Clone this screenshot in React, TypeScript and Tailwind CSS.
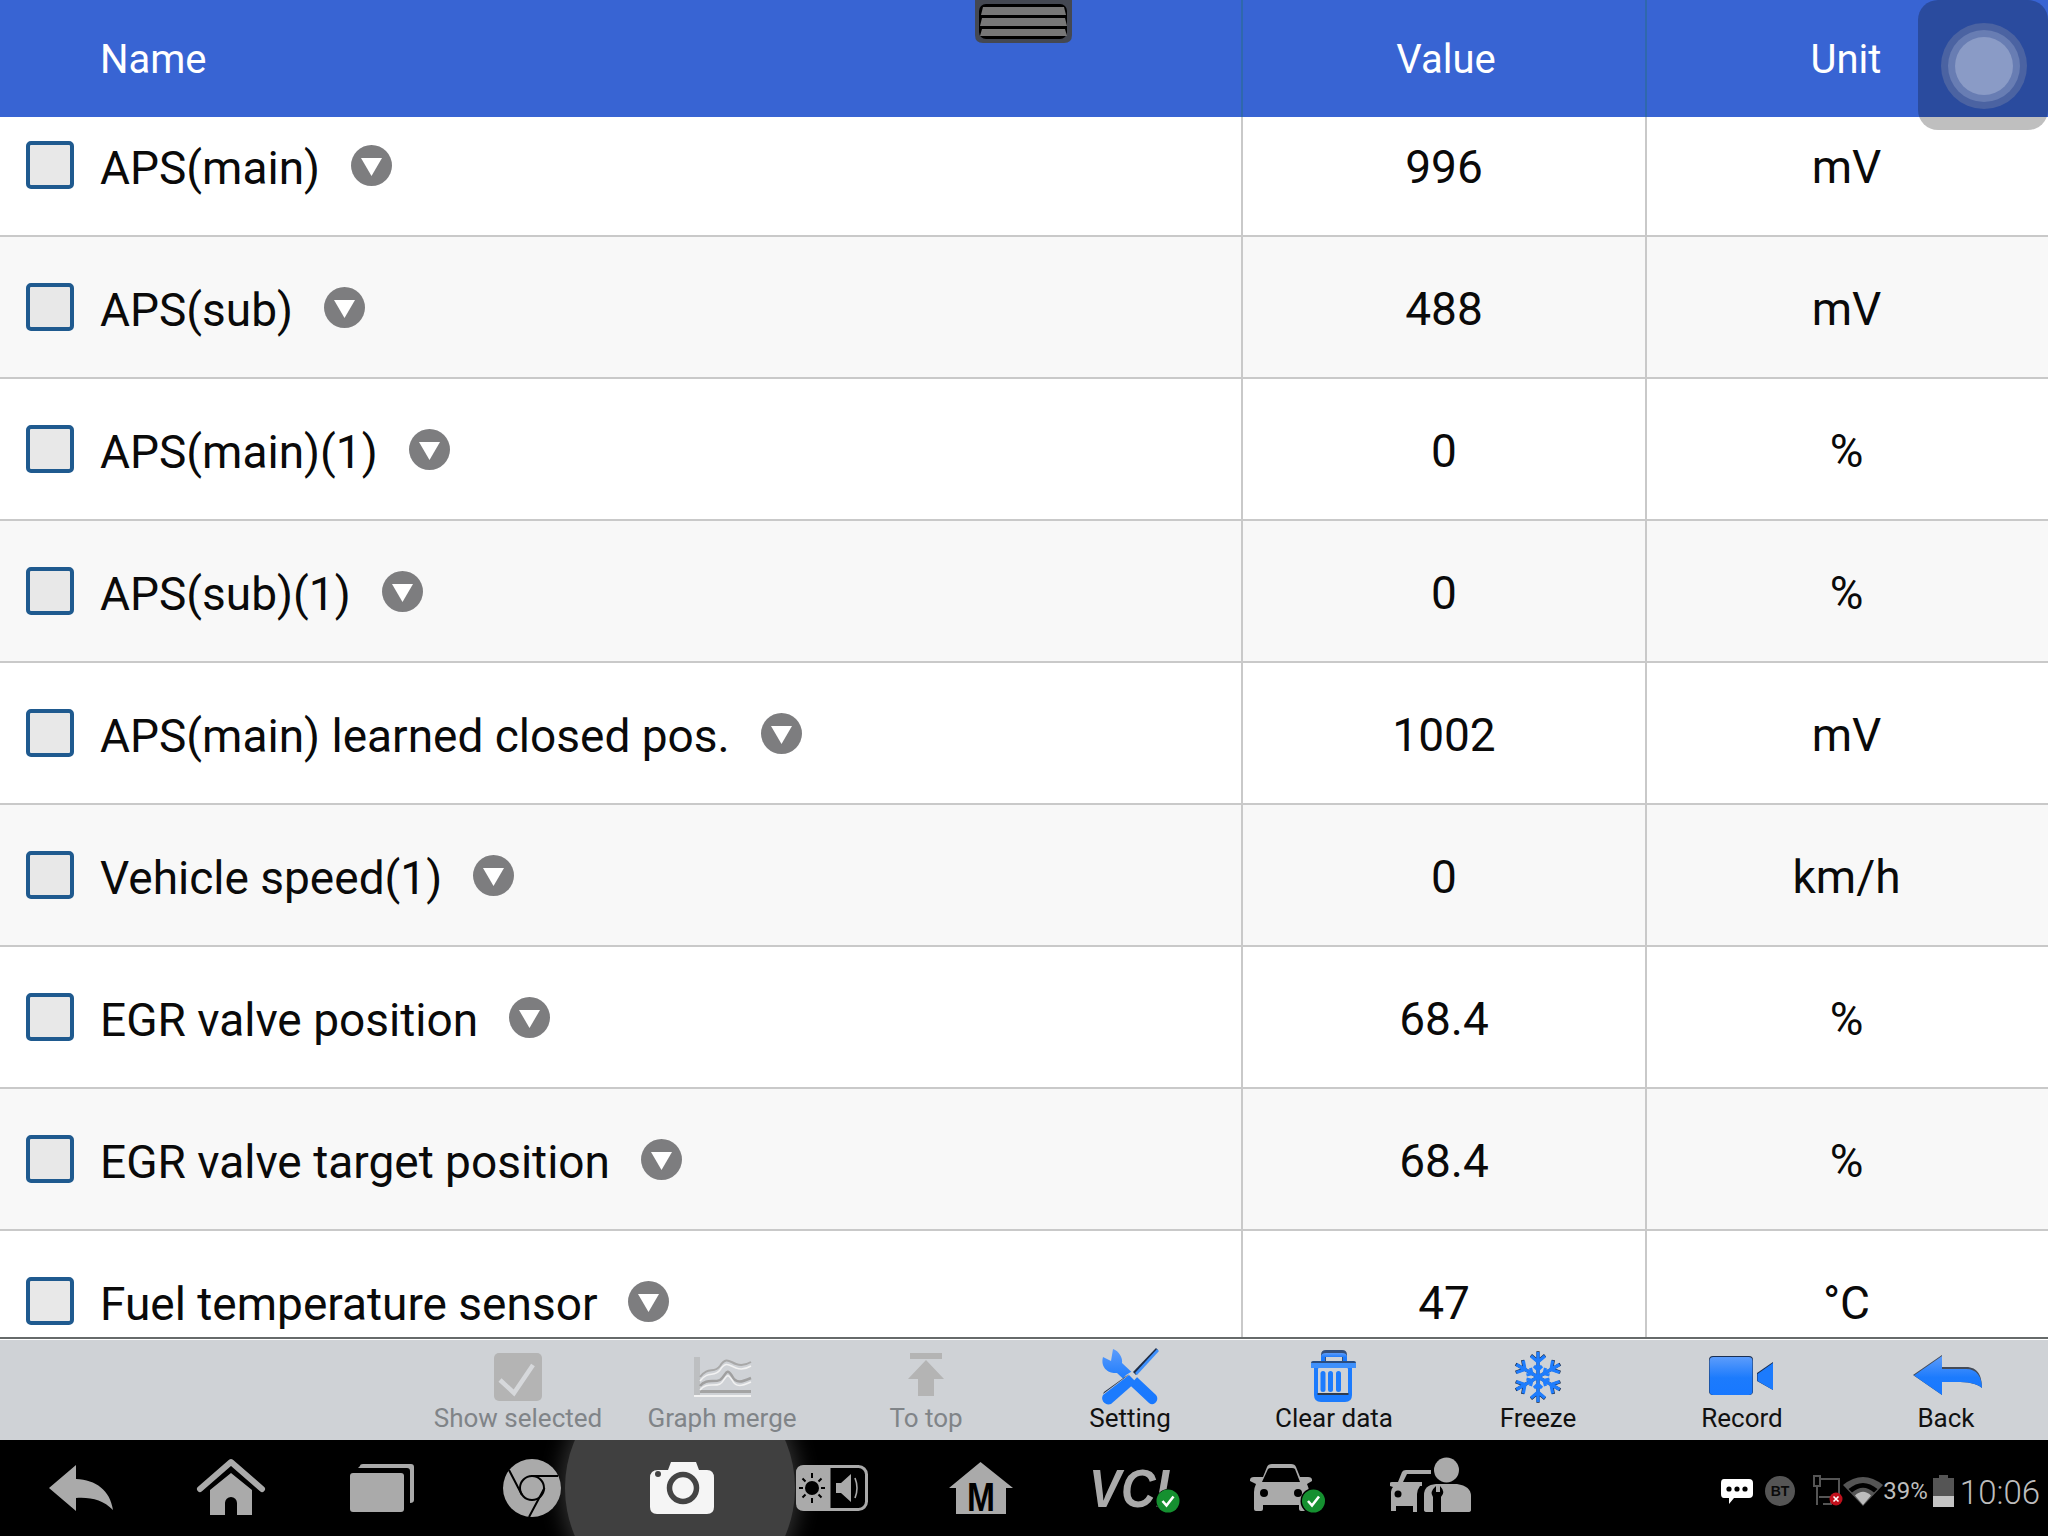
import React from "react";

const rows = [
  ["APS(main)", "996", "mV"],
  ["APS(sub)", "488", "mV"],
  ["APS(main)(1)", "0", "%"],
  ["APS(sub)(1)", "0", "%"],
  ["APS(main) learned closed pos.", "1002", "mV"],
  ["Vehicle speed(1)", "0", "km/h"],
  ["EGR valve position", "68.4", "%"],
  ["EGR valve target position", "68.4", "%"],
  ["Fuel temperature sensor", "47", "°C"],
];

function Grad() {
  return (
    <defs>
      <linearGradient id="blueg" x1="0" y1="0" x2="0" y2="1">
        <stop offset="0" stopColor="#5c9cfb" />
        <stop offset="0.55" stopColor="#1c7bfd" />
        <stop offset="1" stopColor="#1878ff" />
      </linearGradient>
    </defs>
  );
}

const B = "url(#blueg)";

const toolIcons: Record<string, React.ReactNode> = {
  show: (
    <>
      <rect x="16" y="5" width="48" height="48" rx="5" fill="#b4b4b4" />
      <path d="M22 32 L36 45 L55 17" fill="none" stroke="#d6d8db" strokeWidth="4.5" />
    </>
  ),
  graph: (
    <>
      <rect x="12" y="9" width="6" height="39" fill="#bdbfc1" />
      <rect x="18" y="42" width="51" height="3" fill="#a4a4a4" />
      <rect x="12" y="47" width="57" height="2" fill="#f2f2f2" />
      <path d="M18 29 C26 18 32 26 38 18 C44 8 48 14 54 16 C60 18 64 17 69 14" fill="none" stroke="#a8a8a8" strokeWidth="2" />
      <path d="M18 33 C26 22 32 30 38 22 C44 12 48 18 54 20 C60 22 64 21 69 18" fill="none" stroke="#f2f2f2" strokeWidth="1.5" />
      <path d="M18 38 C24 30 32 35 38 32 C44 28 44 18 50 28 C54 36 60 34 69 30" fill="none" stroke="#a0a0a0" strokeWidth="2.5" />
      <path d="M18 42 C24 34 32 39 38 36 C44 32 44 22 50 32 C54 40 60 38 69 34" fill="none" stroke="#f2f2f2" strokeWidth="1.5" />
    </>
  ),
  top: (
    <>
      <rect x="24" y="5" width="32" height="6" fill="#b4b4b4" />
      <path d="M40 12 L58 31 H48 V48 H32 V31 H22 Z" fill="#b4b4b4" />
    </>
  ),
  setting: (
    <g>
      <path d="M13 9 L21 13 L23 1 C29 3 33 10 32 15 L66 47 C70 52 64 59 59 55 L27 25 C19 26 10 20 13 9 Z" fill={B} />
      <path d="M36 27 L44 22 L49 27 L22 57 L16 52 Z" fill="#cfd2d6" />
      <path d="M66 0 L68 2 L46 27 L43 24 Z" fill="#1f2c44" />
      <path d="M67 1 L69 3 L47 27 L45 25 Z" fill="#3f90fb" />
      <path d="M39 27 L46 34 L21 56 C15 58 10 52 13 47 Z" fill="#1c7bfd" />
      <path d="M39 26 L37 28 L13 46 L14 44 Z" fill="#1f2c44" />
    </g>
  ),
  clear: (
    <>
      <path d="M27 13 V7 Q27 2 32 2 H48 Q53 2 53 7 V13 H48 V8 H32 V13 Z" fill="#33507d" />
      <path d="M27 13 V9 Q27 5 32 5 H48 Q53 5 53 9 V13 H49 V9 H31 V13 Z" fill={B} />
      <rect x="17" y="13" width="45" height="6" rx="2" fill="#2a4d80" />
      <rect x="17" y="15" width="45" height="5" fill="#3f90fb" />
      <path d="M20 20 H58 V47 Q58 54 51 54 H27 Q20 54 20 47 Z" fill="#1c7bfd" />
      <rect x="24" y="20" width="30" height="27" rx="1" fill="#cfd2d6" />
      <rect x="23.5" y="45" width="31" height="2" fill="#2f3a4c" />
      <rect x="26.5" y="23" width="5" height="21" rx="2.5" fill="#1c7bfd" />
      <rect x="34" y="23" width="5" height="21" rx="2.5" fill="#1c7bfd" />
      <rect x="42" y="23" width="5" height="21" rx="2.5" fill="#1c7bfd" />
    </>
  ),
  freeze: (
    <>
      {[0, 60, 120, 180, 240, 300].map((a) => (
        <g key={a} transform={`rotate(${a} 40 29)`} fill="none">
          <path d="M40 29 V4 M33 8 L40 14 L47 8" stroke="#1a2a46" strokeWidth="3.2" transform="translate(0 -0.8)" />
        </g>
      ))}
      {[0, 60, 120, 180, 240, 300].map((a) => (
        <g key={a} transform={`rotate(${a} 40 29)`} fill="none">
          <path d="M40 29 V4 M33 8 L40 14 L47 8 M36 18 L40 22 L44 18" stroke="#1f7dfd" strokeWidth="3.2" />
        </g>
      ))}
    </>
  ),
  record: (
    <>
      <rect x="7" y="8" width="44" height="39" rx="4" fill="#1a2f52" />
      <rect x="7.5" y="9" width="43" height="38" rx="4" fill={B} />
      <path d="M55 25 L71 14 V42 L55 33 Z" fill="#1a2f52" />
      <path d="M55.5 26 L71 15 V42 L55.5 33 Z" fill="#1c7bfd" />
    </>
  ),
  back: (
    <>
      <path d="M7 27 L36 7 V19 H60 C72 19 76 28 76 40 C70 35 62 34 50 34 H36 V47 Z" fill="#444b58" />
      <path d="M8 27.5 L36 8 V21 H60 C71 21 76 29 76 40 C70 35 62 34 50 34 H36 V47 Z" fill={B} />
    </>
  ),
};

const tools = [
  ["show", "Show selected", false],
  ["graph", "Graph merge", false],
  ["top", "To top", false],
  ["setting", "Setting", true],
  ["clear", "Clear data", true],
  ["freeze", "Freeze", true],
  ["record", "Record", true],
  ["back", "Back", true],
] as const;

const G = "#aaaaaa";

function Badge({ x, y }: { x: number; y: number }) {
  return (
    <g>
      <circle cx={x} cy={y} r="11.5" fill="#159030" />
      <path d={`M${x - 5.5} ${y} l4 4.5 l7 -9`} fill="none" stroke="#fff" strokeWidth="2.6" />
    </g>
  );
}

const navIcons: React.ReactNode[] = [
  <path key="b" d="M18 48 L45 25 V39 C65 40 79 50 82 70 C72 60 60 57 45 58 V71 Z" fill={G} />,
  <g key="h">
    <path d="M19 49 L50 22 L81 49" fill="none" stroke={G} strokeWidth="6" strokeLinecap="round" strokeLinejoin="round" />
    <path d="M29 75 V50 L50 33 L71 50 V75 H56 V63 A6 6 0 0 0 44 63 V75 Z" fill={G} />
  </g>,
  <g key="r">
    <path d="M29 26 Q29 24 32 24 H80 Q83 24 83 27 V60 Q83 63 79 63 V31 Q79 28 76 28 H27 Z" fill={G} />
    <rect x="19" y="33" width="54" height="39" rx="3" fill={G} />
  </g>,
  <g key="c">
    <circle cx="51" cy="48" r="29" fill={G} />
    <circle cx="51" cy="48" r="12" fill="none" stroke="#000" strokeWidth="2" />
    <path d="M77 36 H50 M48 77 L63.5 48 M28 30 L41 55" fill="none" stroke="#000" strokeWidth="2" />
  </g>,
  <g key="cam">
    <path d="M19 38 Q19 30 27 30 H37 L40 22 H65 L68 30 H76 Q83 30 83 38 V67 Q83 74 76 74 H26 Q19 74 19 67 Z" fill="#f5f5f5" />
    <circle cx="27" cy="34" r="3" fill="#444" />
    <circle cx="52" cy="48" r="13.5" fill="none" stroke="#444" strokeWidth="5.5" />
  </g>,
  <g key="bv">
    <rect x="16.5" y="26.5" width="69" height="43" rx="8" fill="none" stroke={G} strokeWidth="3" />
    <path d="M49.5 25 H23 Q15 25 15 33 V63 Q15 71 23 71 H49.5 Z" fill={G} />
    <circle cx="31" cy="48" r="7" fill="#000" />
    <path d="M31 33 V38 M31 58 V63 M18 48 H22 M40 48 H44 M21.5 38.5 L24.5 41.5 M37.5 54.5 L40.5 57.5 M40.5 38.5 L37.5 41.5 M24.5 54.5 L21.5 57.5" stroke="#000" strokeWidth="2" />
    <path d="M55 43 H60 L70 34 V62 L60 53 H55 Z" fill={G} />
    <path d="M74 38 Q78 48 74 58" fill="none" stroke={G} strokeWidth="1.6" />
  </g>,
  <g key="m">
    <path d="M49.5 22 L82 48 H75 V74 H25 V48 H18 Z" fill={G} />
    <text x="50" y="71" textAnchor="middle" fontFamily="Liberation Sans" fontWeight="700" fontSize="40" textLength="28" lengthAdjust="spacingAndGlyphs" fill="#000">M</text>
  </g>,
  <g key="v">
    <text x="8" y="67" fontFamily="Liberation Sans" fontWeight="700" fontStyle="italic" fontSize="54" textLength="80" lengthAdjust="spacingAndGlyphs" fill={G}>VCI</text>
    <circle cx="87" cy="61" r="12" fill="#000" />
    <Badge x={87} y={61} />
  </g>,
  <g key="car">
    <path d="M32 37 L36 27 Q37 24 41 24 H60 Q64 24 65 27 L69 37 H77 Q81 37 81 40 V41 L76 44 Q78 48 78 52 V69 Q78 71 75 71 H70 Q68 71 68 69 V65 H32 V69 Q32 71 30 71 H25 Q23 71 23 69 V52 Q23 48 25 44 L19 41 V40 Q19 37 23 37 Z" fill={G} />
    <path d="M31 42 L37 29 Q38 28 40 28 H61 Q63 28 64 29 L69 42 Z" fill="#000" />
    <circle cx="33" cy="53" r="4" fill="#000" />
    <circle cx="67" cy="53" r="4" fill="#000" />
    <circle cx="82.5" cy="61" r="13" fill="#000" />
    <Badge x={82.5} y={61} />
  </g>,
  <g key="p">
    <path d="M17 42 L21 32 Q22 30 25 30 H50 V34 H26 L22 42 H41 V46 H39 Q36 50 36 54 V72 H32 V66 H15 V71 H10 V52 Q10 49 12 47 L9 46 V43 Q9 42 11 42 Z" fill={G} />
    <circle cx="17" cy="54" r="3.5" fill="#000" />
    <ellipse cx="65.5" cy="30" rx="12.5" ry="12.5" fill={G} />
    <path d="M43 55 Q43 45 55 44 H76 Q90 46 90 56 V70 Q90 72 87 72 H46 Q43 72 43 70 Z" fill={G} />
    <path d="M55 46 Q48 52 52 57 V72 H60 V57 Q65 52 59 46 V52 H55 Z" fill="#000" />
  </g>,
];

export default function App() {
  return (
    <div className="relative flex h-[1536px] w-[2048px] flex-col overflow-hidden bg-white font-['Roboto',sans-serif]">
      <header className="flex h-[117px] shrink-0 items-center bg-[#3864d3] pt-0 text-[40px] leading-[46px] text-white">
        <div className="w-[1241px] pl-[100px] pt-[2px]">Name</div>
        <div className="h-full w-[2px] bg-[#2f68ad]" />
        <div className="w-[402px] pl-[4px] pt-[2px] text-center">Value</div>
        <div className="h-full w-[2px] bg-[#2f68ad]" />
        <div className="flex-1 pr-[3px] pt-[2px] text-center">Unit</div>
      </header>

      <main className="min-h-0 flex-1 overflow-hidden">
        <div className="-mt-[22px]">
          {rows.map(([name, value, unit], i) => (
            <div
              key={name}
              className={`flex h-[142px] items-stretch border-b-2 border-[#c9c9c9] text-[46px] text-[#0a0a0a] ${i % 2 ? "bg-[#f8f8f8]" : "bg-white"}`}
            >
              <div className="flex w-[1241px] items-center pl-[26px]">
                <div className="h-[48px] w-[48px] rounded-[5px] border-[4px] border-[#1f5a8f] bg-[#e8e8e8]" />
                <span className="ml-[26px] pt-[5px] leading-none">{name}</span>
                <svg className="ml-[31px]" width="41" height="41" viewBox="0 0 41 41">
                  <circle cx="20.5" cy="20.5" r="20.5" fill="#7d7d7f" />
                  <path d="M10 13 H31 L20.5 31 Z" fill="#fff" />
                </svg>
              </div>
              <div className="flex w-[406px] items-center justify-center border-x-2 border-[#c9c9c9] pt-[5px]">{value}</div>
              <div className="flex flex-1 items-center justify-center pr-[2px] pt-[5px]">{unit}</div>
            </div>
          ))}
        </div>
      </main>

      <div className="h-[3px] shrink-0 border-t-2 border-[#666a6a] bg-white" />

      <section className="flex h-[100px] shrink-0 justify-end bg-[#cfd2d6]">
        {tools.map(([id, label, on]) => (
          <div key={id} className="flex w-[204px] flex-col items-center pt-[8px]">
            <svg width="80" height="60" viewBox="0 0 80 60">
              <Grad />
              {toolIcons[id]}
            </svg>
            <span className={`-mt-[4px] text-[26px] leading-[28px] ${on ? "text-[#111111]" : "text-[#808488]"}`}>{label}</span>
          </div>
        ))}
      </section>

      <nav className="relative flex h-[96px] shrink-0 items-center overflow-hidden bg-black pl-[6px]">
        <div className="absolute left-[565px] top-[-70px] h-[236px] w-[230px] rounded-[50%] bg-[#404040] shadow-[0_0_22px_4px_#333333]" />
        {navIcons.map((ic, i) => (
          <div key={i} className="relative flex w-[150px] justify-center">
            <svg width="100" height="96" viewBox="0 0 100 96">
              {ic}
            </svg>
          </div>
        ))}
        <div className="relative ml-auto flex items-center pr-[8px] pt-[5px] text-[#bdbdbd]">
          <svg width="34" height="26" viewBox="0 0 34 26">
            <path d="M4 1 H29 Q33 1 33 5 V16 Q33 20 29 20 H14 L9 26 V20 H4 Q1 20 1 16 V5 Q1 1 4 1 Z" fill="#fff" />
            <circle cx="9" cy="11" r="2.6" fill="#000" />
            <circle cx="17" cy="11" r="2.6" fill="#000" />
            <circle cx="25" cy="11" r="2.6" fill="#000" />
          </svg>
          <svg className="ml-[11px]" width="30" height="30" viewBox="0 0 30 30">
            <circle cx="15" cy="15" r="15" fill="#555" />
            <text x="15" y="20" textAnchor="middle" fontFamily="Liberation Sans" fontWeight="700" fontSize="14" fill="#0a0a0a">BT</text>
          </svg>
          <svg className="ml-[14px]" width="34" height="32" viewBox="0 0 34 32">
            <path d="M5 1 H11 V11 H5 Z M8 11 V30 M11 4 H30 V24 M10 22 H22 V29 H14" fill="none" stroke="#555" strokeWidth="2" />
            <circle cx="27" cy="24" r="6.5" fill="#c0101c" />
            <path d="M24.5 21.5 L29.5 26.5 M29.5 21.5 L24.5 26.5" stroke="#fff" strokeWidth="1.6" />
          </svg>
          <svg width="40" height="30" viewBox="0 0 40 30">
            <path d="M0 9 Q20 -7 40 9 L20 30 Z" fill="#555" />
            <path d="M5.5 13 Q20 1 34.5 13 L31 16.5 Q20 7 9 16.5 Z" fill="#000" />
            <path d="M12 19.5 Q20 12 28 19.5 L20 29 Z" fill="#bdbdbd" />
          </svg>
          <span className="text-[24px] leading-none">39%</span>
          <svg className="ml-[5px]" width="21" height="32" viewBox="0 0 21 32">
            <rect x="6" y="0" width="9" height="3" fill="#555" />
            <rect x="0" y="3" width="21" height="29" fill="#555" />
            <rect x="0" y="21" width="21" height="11" fill="#c4c4c4" />
          </svg>
          <span className="ml-[6px] mt-[4px] text-[33px] font-light leading-none">10:06</span>
        </div>
      </nav>

      {/* drawer grabber */}
      <svg className="absolute left-[975px] top-0" width="97" height="43" viewBox="0 0 97 43">
        <path d="M0 0 H97 V35 Q97 43 89 43 H8 Q0 43 0 35 Z" fill="#444852" />
        <rect x="4" y="4" width="88" height="35" rx="7" fill="#000" />
        <path d="M8 7 H89 L91 15 H6 Z M7 18 H90 L92 26 H5 Z M7 29 H90 L92 36 H5 Z" fill="#777" />
      </svg>

      {/* floating assistive button */}
      <div className="absolute left-[1918px] top-0 flex h-[130px] w-[130px] items-center justify-center rounded-[20px] bg-black/25 pl-[2px] pt-[1px]">
        <div className="flex h-[86px] w-[86px] items-center justify-center rounded-full bg-[#4b63a2]">
          <div className="flex h-[72px] w-[72px] items-center justify-center rounded-full bg-[#687db3]">
            <div className="h-[58px] w-[58px] rounded-full bg-[#8a9bc6]" />
          </div>
        </div>
      </div>
    </div>
  );
}
